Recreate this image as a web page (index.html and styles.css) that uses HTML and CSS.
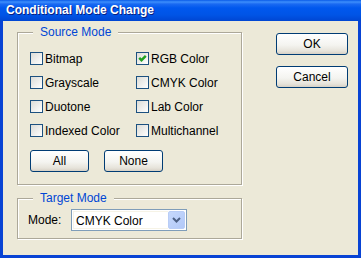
FILE: index.html
```html
<!DOCTYPE html>
<html>
<head lang="en">
    <meta charset="UTF-8">
    <title>Conditional Mode Change</title>
    <link rel="stylesheet" href="styles.css">
</head>
<body>
<div class="window">
    <div class="titlebar">Conditional Mode Change</div>
    <div class="client">
        <div class="left">
            <fieldset class="group source">
                <legend>Source Mode</legend>
                <div class="checks">
                    <label class="check"><span class="box"></span>Bitmap</label>
                    <label class="check"><span class="box">
                        <svg width="11" height="11" viewBox="0 0 11 11"><path d="M2.2 4.8 L4.5 7.2 L8.8 2.8" fill="none" stroke="#21a121" stroke-width="2.4"/></svg>
                    </span>RGB Color</label>
                    <label class="check"><span class="box"></span>Grayscale</label>
                    <label class="check"><span class="box"></span>CMYK Color</label>
                    <label class="check"><span class="box"></span>Duotone</label>
                    <label class="check"><span class="box"></span>Lab Color</label>
                    <label class="check"><span class="box"></span>Indexed Color</label>
                    <label class="check"><span class="box"></span>Multichannel</label>
                </div>
                <div class="pair">
                    <a class="btn small">All</a>
                    <a class="btn small">None</a>
                </div>
            </fieldset>
            <fieldset class="group target">
                <legend>Target Mode</legend>
                <div class="mode-row">
                    <span class="mode-label">Mode:</span>
                    <div class="select">
                        <span class="value">CMYK Color</span>
                        <span class="arrow">
                            <svg width="9" height="6" viewBox="0 0 9 6"><path d="M1 1 L4.5 4.5 L8 1" fill="none" stroke="#4d6185" stroke-width="2"/></svg>
                        </span>
                    </div>
                </div>
            </fieldset>
        </div>
        <div class="right">
            <a class="btn wide">OK</a>
            <a class="btn wide">Cancel</a>
        </div>
    </div>
</div>
</body>
</html>
```

FILE: styles.css
```css
* {
    margin: 0;
    padding: 0;
    box-sizing: border-box;
}

body {
    font: 12px "Liberation Sans", Arial, sans-serif;
    color: #000;
    background: #ece9d8;
}

.window {
    width: 361px;
    height: 258px;
    display: flex;
    flex-direction: column;
}

.titlebar {
    height: 21px;
    line-height: 21px;
    padding-left: 6px;
    color: #fff;
    font-weight: bold;
    text-shadow: 1px 1px 0 #0a1e80;
    background: linear-gradient(#0a5be8 0, #3d8ffc 2px, #1a6af2 4px, #0058ee 8px, #0054e6 15px, #0046d2 21px);
}

.client {
    flex: 1;
    display: flex;
    padding: 4px 0 0 14px;
    border: 3px solid #0843d4;
    border-top: 0;
}

.left {
    width: 225px;
}

.group {
    border: 1px solid #aca899;
    box-shadow: inset 1px 1px 0 #fff, 1px 1px 0 #fff;
}

.group legend {
    padding: 0 7px;
    line-height: 14px;
    color: #0046d5;
    background: #ece9d8;
}

.source {
    padding: 13px 0 12px 12px;
}

.source legend {
    margin-left: 3px;
}

.checks {
    display: grid;
    grid-template-columns: 106px 1fr;
    row-gap: 11px;
}

.check {
    display: flex;
    align-items: center;
    height: 13px;
}

.box {
    width: 13px;
    height: 13px;
    margin-right: 2px;
    border: 1px solid #1c5180;
    background: linear-gradient(135deg, #dcdcd7, #fff);
    display: flex;
    align-items: center;
    justify-content: center;
}

.pair {
    display: flex;
    gap: 15px;
    margin-top: 13px;
}

.btn {
    display: flex;
    align-items: center;
    justify-content: center;
    height: 22px;
    border: 1px solid #003c74;
    border-radius: 3px;
    background: linear-gradient(#fff, #f4f4f0 55%, #e6e3da 85%, #d6d0c5);
    cursor: default;
}

.small {
    width: 59px;
}

.target {
    margin-top: 6px;
    padding: 4px 0 7px 10px;
}

.target legend {
    margin-left: 5px;
}

.mode-row {
    display: flex;
    align-items: center;
}

.mode-label {
    width: 43px;
}

.select {
    width: 116px;
    height: 22px;
    display: flex;
    align-items: center;
    padding: 1px;
    border: 1px solid #7f9db9;
    background: #fff;
}

.value {
    flex: 1;
    height: 18px;
    line-height: 18px;
    padding-left: 2px;
    border: 1px solid #f6f3e6;
    border-right: 0;
}

.arrow {
    width: 17px;
    height: 18px;
    display: flex;
    align-items: center;
    justify-content: center;
    border: 1px solid #b9cdf6;
    border-radius: 2px;
    background: linear-gradient(135deg, #c6d8fc, #b2c9f8);
}

.right {
    margin-left: 34px;
    padding-top: 8px;
    display: flex;
    flex-direction: column;
    gap: 11px;
}

.wide {
    width: 72px;
}
```
